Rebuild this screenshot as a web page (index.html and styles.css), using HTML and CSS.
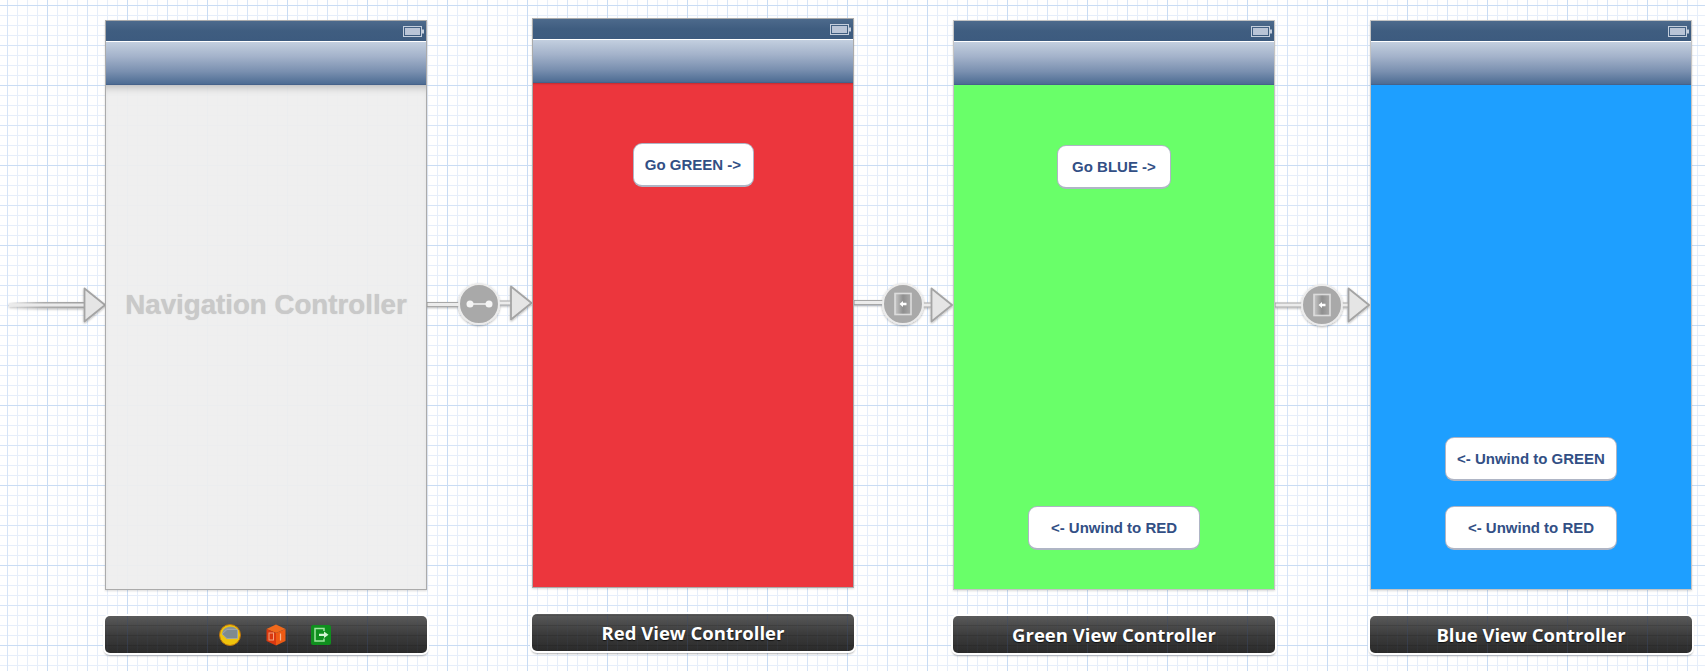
FILE: index.html
```html
<!DOCTYPE html>
<html lang="en">
<head>
    <meta charset="UTF-8">
    <title>Storyboard</title>
    <link rel="stylesheet" href="styles.css">
</head>
<body>

<div class="canvas">
    <svg class="links" width="1705" height="671" viewBox="0 0 1705 671">
        <defs>
            <linearGradient id="fade" x1="0" x2="1" y1="0" y2="0">
                <stop offset="0" stop-color="#a8a8a8" stop-opacity="0"/>
                <stop offset="0.45" stop-color="#acacac"/>
                <stop offset="1" stop-color="#a0a0a0"/>
            </linearGradient>
            <linearGradient id="door" x1="0" x2="1" y1="0" y2="0">
                <stop offset="0" stop-color="#c8c8c8"/>
                <stop offset="0.5" stop-color="#8f8f8f"/>
                <stop offset="1" stop-color="#a9a9a9"/>
            </linearGradient>
            <filter id="soft" x="-20%" y="-40%" width="140%" height="190%">
                <feDropShadow dx="0" dy="1" stdDeviation="1.2" flood-color="#000" flood-opacity="0.3"/>
            </filter>
            <g id="head">
                <path d="M0 -16.500 L20.500 0 L0 16.500 Z" fill="#e5e5e5" stroke="#a4a4a4" stroke-width="1.800" stroke-linejoin="round"/>
            </g>
            <g id="segue-door">
                <circle r="20" fill="#a9a9a9" stroke="#ececec" stroke-width="2"/>
                <rect x="-8" y="-10.500" width="16" height="21" fill="url(#door)" stroke="#dcdcdc" stroke-width="1.600"/>
                <path d="M-3.500 0 L0 -3 L0 -1.200 L3.500 -1.200 L3.500 1.200 L0 1.200 L0 3 Z" fill="#fff"/>
            </g>
        </defs>

        <!-- initial arrow -->
        <g filter="url(#soft)">
            <rect x="9" y="303" width="76" height="4" fill="#ececec" fill-opacity="0.9"/>
            <rect x="9" y="302" width="76" height="1.500" fill="url(#fade)"/>
            <rect x="9" y="306.500" width="76" height="1.800" fill="url(#fade)"/>
            <use href="#head" x="84.500" y="305"/>
        </g>

        <!-- push segue -->
        <g filter="url(#soft)">
            <rect x="427" y="302.500" width="34" height="4" fill="#ececec" stroke="#a8a8a8"/>
            <rect x="497" y="301" width="15" height="4" fill="#ececec" stroke="#a8a8a8"/>
            <use href="#head" x="511" y="303"/>
            <circle cx="479" cy="304" r="20" fill="#a9a9a9" stroke="#ececec" stroke-width="2"/>
            <path d="M470 304 H489" stroke="#f5f5f5" stroke-width="1.500"/>
            <circle cx="470" cy="304" r="3.500" fill="#f5f5f5"/>
            <circle cx="489" cy="304" r="3.500" fill="#f5f5f5"/>
        </g>

        <!-- custom segues -->
        <g filter="url(#soft)">
            <rect x="854" y="300.500" width="32" height="4" fill="#ececec" stroke="#a8a8a8"/>
            <rect x="920" y="303" width="13" height="4" fill="#ececec" stroke="#a8a8a8"/>
            <use href="#head" x="931.500" y="305"/>
            <use href="#segue-door" x="903" y="304"/>
        </g>
        <g filter="url(#soft)">
            <rect x="1275" y="303" width="30" height="4" fill="#ececec" stroke="#a8a8a8"/>
            <rect x="1338" y="303" width="12" height="4" fill="#ececec" stroke="#a8a8a8"/>
            <use href="#head" x="1348.500" y="305"/>
            <use href="#segue-door" x="1322" y="305"/>
        </g>
    </svg>

    <section class="scene scene-nav">
        <div class="frame">
            <div class="status-bar">
                <svg class="battery" width="21" height="11" viewBox="0 0 21 11"><rect x="0.500" y="0.500" width="18" height="10" fill="none" stroke="#c4cedc"/><rect x="2" y="2" width="15" height="7" fill="#b9c4d6"/><rect x="19" y="3.500" width="2" height="4" fill="#c4cedc"/></svg>
            </div>
            <div class="nav-bar"></div>
            <div class="view view-nav">
                <span class="nav-title">Navigation Controller</span>
            </div>
        </div>
        <div class="dock dock-icons">
            <svg width="22" height="22" viewBox="0 0 22 22">
                <circle cx="11" cy="11" r="10.500" fill="#efc30c" stroke="#b9720e"/>
                <path d="M3 10 A8.500 8 0 0 1 19 7 L19 14 L8 15 Z" fill="#8b9499"/>
                <path d="M3 10 L8 5.500 H18.500 V14.500 H8 Z" fill="#7e8a90" stroke="#a9b2b6" stroke-width="0.600"/>
            </svg>
            <svg width="20" height="22" viewBox="0 0 20 22">
                <path d="M10 0.500 L19.500 5 L10 9 L0.500 5 Z" fill="#f0691c"/>
                <path d="M0.500 5 L10 9 V21.500 L0.500 17 Z" fill="#d9380f"/>
                <path d="M19.500 5 L10 9 V21.500 L19.500 17 Z" fill="#ee5a14"/>
                <rect x="3" y="9" width="4.500" height="7" fill="none" stroke="#f3a07a"/>
                <path d="M14.500 9.500 V16.500" stroke="#f7b48e" stroke-width="1.200"/>
            </svg>
            <svg width="20" height="20" viewBox="0 0 20 20">
                <rect x="0" y="0" width="20" height="20" rx="2" fill="#0f8f1e"/>
                <path d="M13 6 V3.500 H4 V16 H13 V13.500" fill="none" stroke="#9fe6a0" stroke-width="1.500"/>
                <path d="M8 8.700 H13 V6.500 L17.500 9.800 L13 13 V10.900 H8 Z" fill="#d2f5d2"/>
            </svg>
        </div>
    </section>

    <section class="scene scene-red">
        <div class="frame">
            <div class="status-bar">
                <svg class="battery" width="21" height="11" viewBox="0 0 21 11"><rect x="0.500" y="0.500" width="18" height="10" fill="none" stroke="#c4cedc"/><rect x="2" y="2" width="15" height="7" fill="#b9c4d6"/><rect x="19" y="3.500" width="2" height="4" fill="#c4cedc"/></svg>
            </div>
            <div class="nav-bar"></div>
            <div class="view view-red">
                <div class="btn btn-small">Go GREEN -&gt;</div>
            </div>
        </div>
        <div class="dock">Red View Controller</div>
    </section>

    <section class="scene scene-green">
        <div class="frame">
            <div class="status-bar">
                <svg class="battery" width="21" height="11" viewBox="0 0 21 11"><rect x="0.500" y="0.500" width="18" height="10" fill="none" stroke="#c4cedc"/><rect x="2" y="2" width="15" height="7" fill="#b9c4d6"/><rect x="19" y="3.500" width="2" height="4" fill="#c4cedc"/></svg>
            </div>
            <div class="nav-bar"></div>
            <div class="view view-green">
                <div class="btn btn-small btn-narrow">Go BLUE -&gt;</div>
                <div class="btn btn-wide btn-last">&lt;- Unwind to RED</div>
            </div>
        </div>
        <div class="dock">Green View Controller</div>
    </section>

    <section class="scene scene-blue">
        <div class="frame">
            <div class="status-bar">
                <svg class="battery" width="21" height="11" viewBox="0 0 21 11"><rect x="0.500" y="0.500" width="18" height="10" fill="none" stroke="#c4cedc"/><rect x="2" y="2" width="15" height="7" fill="#b9c4d6"/><rect x="19" y="3.500" width="2" height="4" fill="#c4cedc"/></svg>
            </div>
            <div class="nav-bar"></div>
            <div class="view view-blue">
                <div class="btn btn-wide btn-upper">&lt;- Unwind to GREEN</div>
                <div class="btn btn-wide btn-next">&lt;- Unwind to RED</div>
            </div>
        </div>
        <div class="dock">Blue View Controller</div>
    </section>
</div>

</body>
</html>
```

FILE: styles.css
```css
html, body {
    margin: 0;
    height: 100%;
    overflow: hidden;
}
body {
    background-color: #fff;
    font-family: "Liberation Sans", Arial, sans-serif;
}
.canvas {
    position: relative;
    width: 1705px;
    height: 671px;
    background-image:
        linear-gradient(90deg, #c9dcf4 1px, transparent 1px),
        linear-gradient(#c9dcf4 1px, transparent 1px),
        linear-gradient(90deg, #d6e4f7 1px, transparent 1px),
        linear-gradient(#d6e4f7 1px, transparent 1px),
        linear-gradient(90deg, #e6eefa 1px, transparent 1px),
        linear-gradient(#e6eefa 1px, transparent 1px);
    background-size: 80px 80px, 80px 80px, 40px 40px, 40px 40px, 10px 10px, 10px 10px;
    background-position: 47px 0, 0 5px, 7px 0, 0 5px, 7px 0, 0 5px;
}
.links {
    position: absolute;
    left: 0;
    top: 0;
}
.scene {
    position: absolute;
    width: 322px;
    display: flex;
    flex-direction: column;
}
.scene-nav { left: 105px; top: 20px; }
.scene-red { left: 532px; top: 18px; }
.scene-green { left: 953px; top: 20px; }
.scene-blue { left: 1370px; top: 20px; }

.frame {
    height: 570px;
    display: flex;
    flex-direction: column;
    border: 1px solid #ababab;
    box-sizing: border-box;
    box-shadow: 0 1px 2px rgba(0, 0, 0, 0.15);
}
.scene-blue .frame, .scene-green .frame {
    border-color: #c4c4c4;
}
.status-bar {
    height: 20px;
    flex: none;
    display: flex;
    justify-content: flex-end;
    align-items: center;
    padding-right: 2px;
    background: linear-gradient(#4d6a8c, #3f5d80 50%, #3d5b7f);
}
.nav-bar {
    height: 44px;
    flex: none;
    box-sizing: border-box;
    border-top: 1px solid #fff;
    border-bottom: 1px solid #46628a;
    background: linear-gradient(#c3cfdf, #a3b2ca 35%, #7a90b0 70%, #4d6c93);
    position: relative;
    z-index: 1;
}
.view {
    flex: 1;
    display: flex;
    flex-direction: column;
    align-items: center;
}
.view-nav {
    justify-content: center;
    background-color: rgba(238, 238, 238, 0.92);
    box-shadow: inset 0 8px 8px -6px rgba(0, 0, 0, 0.25);
}
.nav-title {
    font-size: 27.7px;
    font-weight: bold;
    color: #c9c9c9;
    text-shadow: 0 0 1px #c9c9c9;
    margin-bottom: 64px;
}
.view-red { background-color: #ec363d; box-shadow: inset 0 2px 2px -1px rgba(0, 0, 0, 0.2); }
.view-green { background-color: #69ff69; }
.view-blue { background-color: #1e9fff; }

.btn {
    height: 44px;
    box-sizing: border-box;
    display: flex;
    justify-content: center;
    align-items: center;
    border: 1px solid rgba(110, 120, 150, 0.55);
    border-bottom-width: 2px;
    border-radius: 9px;
    background-color: #fff;
    color: #324f85;
    font-size: 15px;
    font-weight: bold;
}
.btn-small {
    width: 121px;
    margin-top: 60px;
}
.btn-narrow { width: 114px; }
.btn-wide { width: 172px; }
.btn-last { margin-top: auto; margin-bottom: 39px; }
.btn-upper { margin-top: auto; }
.btn-next { margin-top: 25px; margin-bottom: 39px; }

.dock {
    height: 37px;
    margin-top: 26px;
    display: flex;
    justify-content: center;
    align-items: center;
    border-radius: 5px;
    color: #fff;
    font-family: "Open Sans", sans-serif;
    font-size: 18.5px;
    font-weight: bold;
    text-shadow: 0 1px 1px rgba(0, 0, 0, 0.7);
    background-image:
        linear-gradient(90deg, rgba(60, 75, 105, 0.35) 1px, transparent 1px),
        linear-gradient(90deg, rgba(60, 75, 105, 0.16) 1px, transparent 1px),
        linear-gradient(rgba(0, 0, 0, 0.12) 1px, transparent 1px),
        linear-gradient(#5a5a5a, #3d3d3d 50%, #2a2a2a);
    background-size: 80px 80px, 10px 10px, 10px 10px, 100% 100%;
    background-position: 47px 0, 7px 0, 0 5px, 0 0;
    background-attachment: fixed, fixed, fixed, scroll;
    box-shadow: 0 0 0 2px #fff, 0 2px 2px 1px rgba(0, 0, 0, 0.3);
}
.dock-icons {
    justify-content: flex-start;
    align-items: center;
    gap: 25px;
    padding-left: 114px;
}
```
